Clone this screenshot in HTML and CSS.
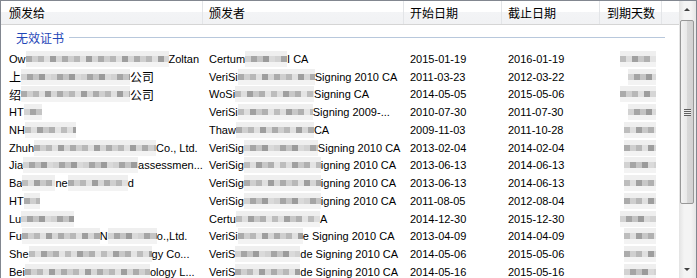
FILE: index.html
```html
<!DOCTYPE html>
<html lang="zh-CN">
<head>
    <meta charset="UTF-8">
    <title>证书列表</title>
    <link rel="stylesheet" href="styles.css">
</head>
<body>
    <div class="list">
        <div class="view">
            <div class="head">
                <div class="col zh">颁发给</div>
                <div class="col zh">颁发者</div>
                <div class="col zh">开始日期</div>
                <div class="col zh">截止日期</div>
                <div class="col zh right">到期天数</div>
                <div class="col"></div>
            </div>

            <div class="group">
                <span class="zh">无效证书</span>
                <i class="rule"></i>
            </div>

            <!-- les noms sont floutés dans la capture -->
            <div class="row">
                <div class="col">Ow<i class="px" style="width:143px"></i>Zoltan</div>
                <div class="col">Certum<i class="px b2" style="width:42px"></i>I CA</div>
                <div class="col">2015-01-19</div>
                <div class="col">2016-01-19</div>
                <div class="col right"><i class="px b3" style="width:36px"></i></div>
            </div>
            <div class="row">
                <div class="col"><span class="zh">上</span><i class="px b2" style="width:109px"></i><span class="zh">公司</span></div>
                <div class="col">VeriSi<i class="px" style="width:77px"></i>Signing 2010 CA</div>
                <div class="col">2011-03-23</div>
                <div class="col">2012-03-22</div>
                <div class="col right"><i class="px b2" style="width:28px"></i></div>
            </div>
            <div class="row">
                <div class="col"><span class="zh">绍</span><i class="px" style="width:109px"></i><span class="zh">公司</span></div>
                <div class="col">WoSi<i class="px b3" style="width:79px"></i>Signing CA</div>
                <div class="col">2014-05-05</div>
                <div class="col">2015-05-06</div>
                <div class="col right"><i class="px" style="width:36px"></i></div>
            </div>
            <div class="row">
                <div class="col">HT<i class="px b2" style="width:18px"></i></div>
                <div class="col">VeriSi<i class="px b3" style="width:75px"></i>Signing 2009-...</div>
                <div class="col">2010-07-30</div>
                <div class="col">2011-07-30</div>
                <div class="col right"><i class="px b2" style="width:28px"></i></div>
            </div>
            <div class="row">
                <div class="col">NH<i class="px b3" style="width:51px"></i></div>
                <div class="col">Thaw<i class="px" style="width:78px"></i>CA</div>
                <div class="col">2009-11-03</div>
                <div class="col">2011-10-28</div>
                <div class="col right"><i class="px b3" style="width:32px"></i></div>
            </div>
            <div class="row">
                <div class="col">Zhuh<i class="px" style="width:122px"></i>Co., Ltd.</div>
                <div class="col">VeriSig<i class="px b2" style="width:74px"></i>Signing 2010 CA</div>
                <div class="col">2013-02-04</div>
                <div class="col">2014-02-04</div>
                <div class="col right"><i class="px" style="width:32px"></i></div>
            </div>
            <div class="row">
                <div class="col">Jia<i class="px b2" style="width:115px"></i>assessmen...</div>
                <div class="col">VeriSig<i class="px b3" style="width:77px"></i>igning 2010 CA</div>
                <div class="col">2013-06-13</div>
                <div class="col">2014-06-13</div>
                <div class="col right"><i class="px b2" style="width:32px"></i></div>
            </div>
            <div class="row">
                <div class="col">Ba<i class="px b3" style="width:33px"></i>ne<i class="px" style="width:60px"></i>d</div>
                <div class="col">VeriSig<i class="px" style="width:77px"></i>igning 2010 CA</div>
                <div class="col">2013-06-13</div>
                <div class="col">2014-06-13</div>
                <div class="col right"><i class="px b3" style="width:32px"></i></div>
            </div>
            <div class="row">
                <div class="col">HT<i class="px" style="width:16px"></i></div>
                <div class="col">VeriSig<i class="px b2" style="width:77px"></i>igning 2010 CA</div>
                <div class="col">2011-08-05</div>
                <div class="col">2012-08-04</div>
                <div class="col right"><i class="px" style="width:32px"></i></div>
            </div>
            <div class="row">
                <div class="col">Lu<i class="px b2" style="width:53px"></i></div>
                <div class="col">Certu<i class="px b3" style="width:84px"></i>A</div>
                <div class="col">2014-12-30</div>
                <div class="col">2015-12-30</div>
                <div class="col right"><i class="px b2" style="width:36px"></i></div>
            </div>
            <div class="row">
                <div class="col">Fu<i class="px" style="width:78px"></i>N<i class="px b2" style="width:49px"></i>o.,Ltd.</div>
                <div class="col">VeriSi<i class="px" style="width:65px"></i>e Signing 2010 CA</div>
                <div class="col">2013-04-09</div>
                <div class="col">2014-04-09</div>
                <div class="col right"><i class="px b3" style="width:32px"></i></div>
            </div>
            <div class="row">
                <div class="col">She<i class="px b3" style="width:123px"></i>gy Co...</div>
                <div class="col">VeriS<i class="px b2" style="width:65px"></i>de Signing 2010 CA</div>
                <div class="col">2014-05-06</div>
                <div class="col">2015-05-06</div>
                <div class="col right"><i class="px" style="width:32px"></i></div>
            </div>
            <div class="row">
                <div class="col">Bei<i class="px" style="width:125px"></i>ology L...</div>
                <div class="col">VeriS<i class="px" style="width:65px"></i>de Signing 2010 CA</div>
                <div class="col">2014-05-16</div>
                <div class="col">2015-05-16</div>
                <div class="col right"><i class="px b2" style="width:32px"></i></div>
            </div>
        </div>

        <div class="scrollbar">
            <div class="arrow up"></div>
            <div class="track">
                <div class="thumb"><span class="grip"></span></div>
            </div>
            <div class="arrow down"></div>
        </div>
    </div>
</body>
</html>
```

FILE: styles.css
```css
body {
    margin: 0;
    padding: 0;
    background-color: #fff;
    font-family: "Liberation Sans", "Noto Sans CJK SC", sans-serif;
    font-size: 11px;
    color: #000;
}

.zh {
    font-family: "Noto Sans CJK SC", sans-serif;
    font-size: 12px;
}

.list {
    display: flex;
    width: 697px;
    height: 278px;
    box-sizing: border-box;
    border: 1px solid #828790;
    border-bottom: none;
    overflow: hidden;
}

.view {
    flex: 1;
    overflow: hidden;
}

.head,
.row {
    display: grid;
    grid-template-columns: 202px 201px 98px 98px 62px 1fr;
}

.head {
    height: 24px;
    box-sizing: border-box;
    border-bottom: 1px solid #d5d5d5;
    background: linear-gradient(#ffffff 0, #ffffff 11px, #f3f4f6 11px, #f1f2f4 100%);
}

.head .col {
    border-right: 1px solid #e3e5e8;
    line-height: 23px;
}

.head .col:last-child {
    border-right: none;
}

.col {
    padding: 0 6px;
    white-space: nowrap;
    overflow: hidden;
    display: flex;
    align-items: center;
}

.col:first-child {
    padding-left: 8px;
}

.right {
    justify-content: flex-end;
}

.group {
    display: flex;
    align-items: center;
    height: 25px;
    padding: 0 14px 0 15px;
}

.group span {
    color: #1f47b8;
}

.rule {
    flex: 1;
    height: 1px;
    margin-left: 5px;
    background-color: #b8c8dc;
}

.row {
    height: 17.75px;
}

/* blocs flous */
.px {
    display: inline-block;
    flex: none;
    height: 6px;
    background: repeating-linear-gradient(90deg, #ababab 0 6px, #cfcfcf 6px 12px, #b8b8b8 12px 18px, #e0e0e0 18px 24px, #9e9e9e 24px 30px, #d6d6d6 30px 36px);
    box-shadow: 0 -5px 0 #efefef, 0 5px 0 #f3f3f3;
}

.px.b2 {
    background: repeating-linear-gradient(90deg, #d2d2d2 0 6px, #a5a5a5 6px 12px, #c4c4c4 12px 18px, #9b9b9b 18px 24px, #dadada 24px 30px);
}

.px.b3 {
    background: repeating-linear-gradient(90deg, #bdbdbd 0 6px, #dedede 6px 12px, #a0a0a0 12px 18px, #c8c8c8 18px 24px, #b0b0b0 24px 30px, #e4e4e4 30px 36px);
}

.scrollbar {
    width: 17px;
    display: flex;
    flex-direction: column;
    background: linear-gradient(90deg, #e3e3e3, #f4f4f4 30%, #f4f4f4 70%, #e6e6e6);
}

.arrow {
    height: 17px;
    position: relative;
}

.arrow::after {
    content: "";
    position: absolute;
    left: 5px;
    top: 7px;
    border-left: 3px solid transparent;
    border-right: 3px solid transparent;
}

.arrow.up::after {
    border-bottom: 3px solid #404040;
}

.arrow.down::after {
    border-top: 3px solid #404040;
}

.track {
    flex: 1;
    padding-top: 2px;
}

.thumb {
    height: 184px;
    margin: 0 0 0 1px;
    width: 14px;
    box-sizing: border-box;
    border: 1px solid #979797;
    border-radius: 2px;
    background: linear-gradient(90deg, #f2f2f2, #e8e8e8 50%, #d8d8d8 51%, #d2d2d2);
    display: flex;
    align-items: center;
    justify-content: center;
}

.grip {
    width: 7px;
    height: 7px;
    background: repeating-linear-gradient(#5f5f5f 0 1px, #ececec 1px 2px);
}
```
